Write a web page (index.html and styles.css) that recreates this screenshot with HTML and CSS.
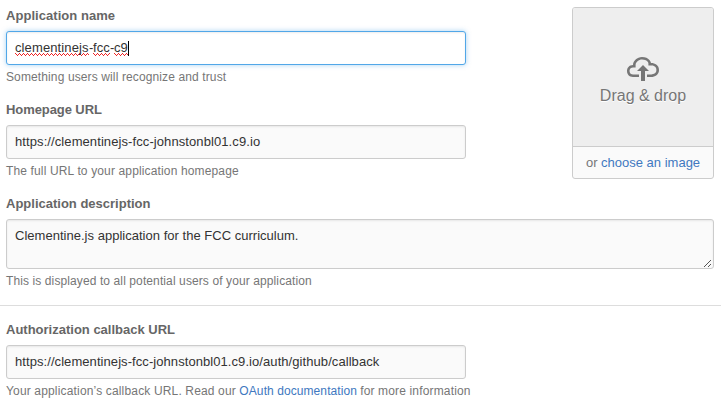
FILE: index.html
```html
<!DOCTYPE html>
<html lang="en">
<head>
<meta charset="utf-8">
<title>Register application</title>
<link rel="stylesheet" href="styles.css">
</head>
<body>
<form class="form">
  <div class="top">
    <div class="fields">
      <div class="group">
        <div class="label label-name">Application name</div>
        <div class="field focused"><span class="spell">clementinejs</span><span class="dash">-</span><span class="spell spell-mid">fcc</span><span class="dash">-</span><span class="spell spell-end">c9</span><span class="caret"></span></div>
        <p class="note note-name">Something users will recognize and trust</p>
      </div>
      <div class="group">
        <div class="label label-home">Homepage URL</div>
        <div class="field"><span class="home-value">https://clementinejs-fcc-johnstonbl01.c9.io</span></div>
        <p class="note note-home">The full URL to your application homepage</p>
      </div>
    </div>
    <div class="upload">
      <div class="drop">
        <svg class="cloud" viewBox="0 2 16 12" aria-hidden="true"><path d="M7 9H5l3-3 3 3H9v5H7V9zm5-4c0-.44-.91-3-4.5-3C5.08 2 3 3.92 3 6 1.02 6 0 7.52 0 9c0 1.53 1 3 3 3h3v-1.3H3c-1.62 0-1.7-1.42-1.7-1.7 0-.17.05-1.7 1.7-1.7h1.3V6c0-1.39 1.56-2.7 3.2-2.7 2.55 0 3.13 1.55 3.2 1.8v1.2H12c.81 0 2.7.22 2.7 2.2 0 2.09-2.25 2.2-2.7 2.2h-2V12h2c2.08 0 4-1.16 4-3.5C16 6.06 14.08 5 12 5z"/></svg>
        <span class="drop-text">Drag &amp; drop</span>
      </div>
      <div class="choose"><span>or <a>choose an image</a></span></div>
    </div>
  </div>
  <div class="group group-desc">
    <div class="label label-desc">Application description</div>
    <div class="field area"><span class="desc-value">Clementine.js application for the FCC curriculum.</span>
      <svg class="grip" viewBox="0 0 8 8" shape-rendering="crispEdges" aria-hidden="true"><path d="M0 7h1v1H0zM1 6h1v1H1zM2 5h1v1H2zM3 4h1v1H3zM4 3h1v1H4zM5 2h1v1H5zM6 1h1v1H6zM4 7h1v1H4zM5 6h1v1H5zM6 5h1v1H6z"/></svg>
    </div>
    <p class="note note-desc">This is displayed to all potential users of your application</p>
  </div>
  <div class="group callback">
    <div class="label label-callback">Authorization callback URL</div>
    <div class="field"><span class="callback-value">https://clementinejs-fcc-johnstonbl01.c9.io/auth/github/callback</span></div>
    <p class="note note-callback">Your application’s callback URL. Read our <a>OAuth documentation</a> for more information</p>
  </div>
</form>
</body>
</html>
```
FILE: styles.css
```css
* { box-sizing: border-box; }
body {
  margin: 0;
  background: #fff;
  color: #333;
  font: 13px/18px "Liberation Sans", Arial, sans-serif;
  overflow: hidden;
}
a { color: #4078c0; }
.form { padding-top: 6px; }
.top { display: flex; justify-content: space-between; padding-right: 7px; }
.group { padding: 0 7px 14px 6px; }
.top .group { padding-right: 0; }
.group-desc { padding-bottom: 15px; }
.label { height: 19px; margin-bottom: 6px; line-height: 19px; font-weight: bold; color: #666; }
.label-name { letter-spacing: .05px; }
.label-home { letter-spacing: -.08px; }
.field {
  display: flex;
  align-items: center;
  width: 460px;
  height: 34px;
  padding: 0 8px;
  border: 1px solid #ccc;
  border-radius: 3px;
  background: #fafafa;
  box-shadow: inset 0 1px 2px rgba(0, 0, 0, .075);
  white-space: nowrap;
}
.focused {
  background: #fff;
  border-color: #51a7e8;
  box-shadow: inset 0 1px 2px rgba(0, 0, 0, .075), 0 0 5px rgba(81, 167, 232, .5);
  letter-spacing: .11px;
}
.home-value { letter-spacing: .09px; }
.desc-value { letter-spacing: .02px; }
.callback-value { letter-spacing: .07px; }
/* Pixel zigzag with a 4px period: one row per gradient. */
.spell {
  width: 74px;
  background:
    linear-gradient(90deg, #e22 1px, transparent 1px) 0 14px / 4px 1px repeat-x,
    linear-gradient(90deg, transparent 1px, #e22 1px) 0 15px / 2px 1px repeat-x,
    linear-gradient(90deg, transparent 2px, #e22 2px, #e22 3px, transparent 3px) 0 16px / 4px 1px repeat-x;
}
.spell-mid { width: 17px; }
.spell-end { width: 14px; }
.dash { width: 4px; }
.caret { width: 1px; height: 15px; background: #000; }
.area { position: relative; width: auto; height: 50px; align-items: flex-start; padding-top: 7px; }
.grip { position: absolute; right: 1px; bottom: 1px; width: 8px; height: 8px; fill: #555; }
.note { height: 18px; margin: 3px 0 0; font-size: 12px; color: #767676; white-space: nowrap; }
.note-name { letter-spacing: .12px; }
.note-home { letter-spacing: .14px; }
.note-desc { letter-spacing: .105px; }
.note-callback { letter-spacing: .17px; }
.note-callback a { letter-spacing: .09px; margin-right: -.3px; }
.note-callback { word-spacing: -.1px; }
.callback { border-top: 1px solid #ddd; padding-top: 14px; }
.upload {
  width: 142px;
  height: 172px;
  margin-top: 1px;
  border: 1px solid #ccc;
  border-radius: 3px;
  background: #fafafa;
  overflow: hidden;
}
.drop {
  display: flex;
  flex-direction: column;
  align-items: center;
  height: 139px;
  padding-top: 49px;
  border-bottom: 1px solid #ccc;
  background: #eee;
  color: #767676;
}
.cloud { width: 32px; height: 24px; fill: #767676; }
.drop-text { margin-top: 5px; font-size: 16px; line-height: 20px; text-shadow: 0 1px 0 #fff; }
.choose { line-height: 31px; text-align: center; color: #767676; }
```
